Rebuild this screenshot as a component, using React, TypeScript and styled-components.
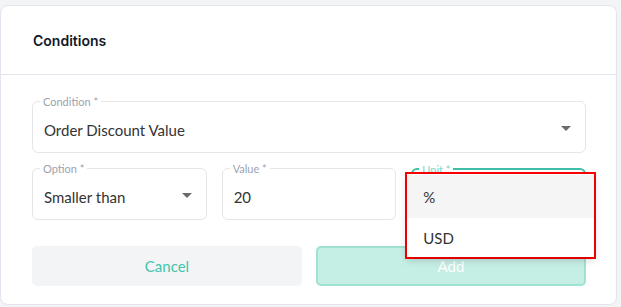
import React from 'react'
import styled, { createGlobalStyle } from 'styled-components'

const GlobalStyle = createGlobalStyle`
  html, body {
    margin: 0;
    padding: 0;
    background: #f3f4f6;
  }
  body {
    font-family: Lato, 'Open Sans', sans-serif;
  }
`

const Page = styled.div`
  width: 621px;
  height: 307px;
  padding: 5px 4px 2px 0;
  box-sizing: border-box;
`
const Card = styled.div`
  background: #fff;
  border: 1px solid #e4e4ee;
  border-radius: 8px;
  height: 100%;
  box-sizing: border-box;
`
const CardHeader = styled.div`
  height: 68px;
  display: flex;
  align-items: center;
  padding: 0 32px;
  border-bottom: 1px solid #e4e4ee;
`
const Title = styled.h3`
  margin: 0;
  font-family: Inter, sans-serif;
  font-size: 14px;
  font-weight: 600;
  color: #111827;
`
const Body = styled.div`
  padding: 26px 30px 0 31px;
  display: flex;
  flex-direction: column;
  gap: 15px;
`
const Row = styled.div`
  display: grid;
  grid-template-columns: 1fr 1fr 1fr;
  gap: 15px;
`
const Field = styled.div<{ $focused?: boolean }>`
  position: relative;
  height: 52px;
  box-sizing: border-box;
  padding: 6px ${p => (p.$focused ? '10px' : '11px')} 0;
  border: ${p => (p.$focused ? '2px solid #3fbfa5' : '1px solid #e6e6e6')};
  border-radius: 6px;
  display: flex;
  align-items: center;
  min-width: 0;
`
const Label = styled.span<{ $focused?: boolean }>`
  position: absolute;
  top: -7px;
  left: ${p => (p.$focused ? '6px' : '7px')};
  padding: 0 3px;
  background: #fff;
  font-size: 11px;
  line-height: 13px;
  color: ${p => (p.$focused ? '#7fd6c4' : '#9ca3af')};
`
const FieldValue = styled.span`
  flex: 1;
  font-size: 15px;
  color: #333;
`
const Caret = styled.span`
  width: 0;
  height: 0;
  margin-right: 3px;
  margin-bottom: 4px;
  border-left: 5px solid transparent;
  border-right: 5px solid transparent;
  border-top: 5px solid #6b6b6b;
`
const Actions = styled.div`
  display: grid;
  grid-template-columns: 1fr 1fr;
  gap: 14px;
  margin-top: 11px;
`
const Button = styled.button<{ $primary?: boolean }>`
  height: 40px;
  border-radius: 5px;
  font-family: Lato, sans-serif;
  font-size: 15px;
  border: ${p => (p.$primary ? '2px solid #9fe2d1' : 'none')};
  background: ${p => (p.$primary ? '#c5eee4' : '#f3f4f6')};
  color: ${p => (p.$primary ? '#fff' : '#43c4aa')};
`
const UnitWrap = styled.div`
  position: relative;
`
const Highlight = styled.div`
  position: absolute;
  top: 4px;
  left: -6px;
  right: -10px;
  border: 2px solid #ff0000;
  z-index: 2;
`
const Menu = styled.div`
  background: #fff;
  box-shadow: 0 3px 8px rgba(0, 0, 0, 0.18);
  padding: 1px 0 0;
`
const MenuItem = styled.div<{ $hover?: boolean }>`
  height: ${p => (p.$hover ? '43px' : '39px')};
  display: flex;
  align-items: center;
  padding: 0 16px;
  font-size: 15px;
  color: #333;
  background: ${p => (p.$hover ? '#f5f5f5' : '#fff')};
`

export default function App() {
  return (
    <>
      <GlobalStyle />
      <Page>
        <Card>
          <CardHeader>
            <Title>Conditions</Title>
          </CardHeader>
          <Body>
            <Field>
              <Label>Condition *</Label>
              <FieldValue>Order Discount Value</FieldValue>
              <Caret />
            </Field>
            <Row>
              <Field>
                <Label>Option *</Label>
                <FieldValue>Smaller than</FieldValue>
                <Caret />
              </Field>
              <Field>
                <Label>Value *</Label>
                <FieldValue>20</FieldValue>
              </Field>
              <UnitWrap>
                <Field $focused>
                  <Label $focused>Unit *</Label>
                </Field>
                <Highlight>
                  <Menu>
                    <MenuItem $hover>%</MenuItem>
                    <MenuItem>USD</MenuItem>
                  </Menu>
                </Highlight>
              </UnitWrap>
            </Row>
            <Actions>
              <Button>Cancel</Button>
              <Button $primary>Add</Button>
            </Actions>
          </Body>
        </Card>
      </Page>
    </>
  )
}
